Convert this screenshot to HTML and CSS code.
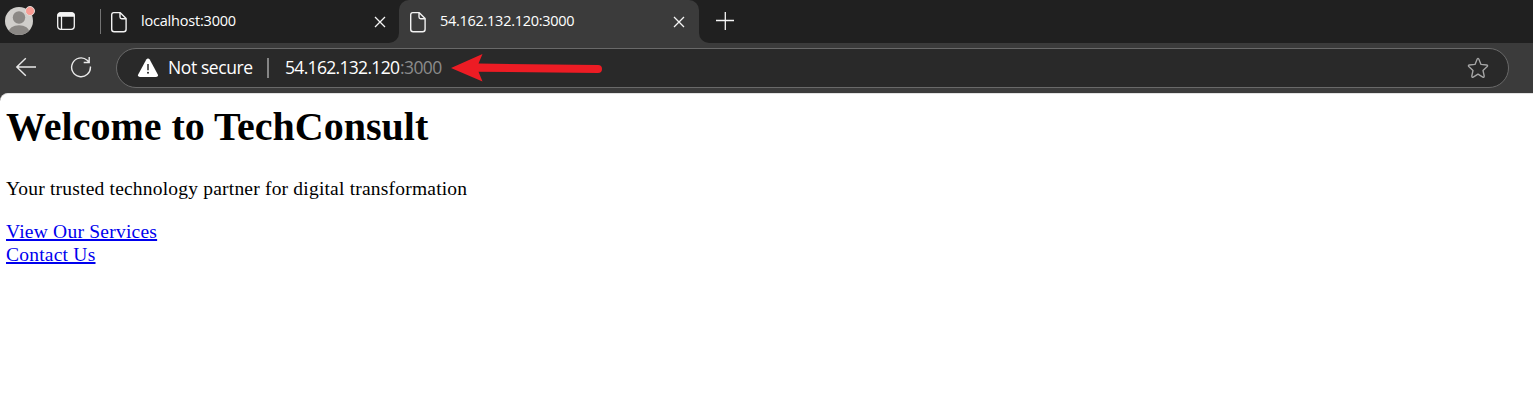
FILE: index.html
```html
<!DOCTYPE html>
<html lang="en">
<head>
<meta charset="utf-8">
<title>TechConsult</title>
<link rel="stylesheet" href="styles.css">
</head>
<body>
<div class="browser">
  <header class="tabstrip">
    <div class="controls">
      <svg class="avatar" width="40" height="43" viewBox="0 0 40 43">
        <defs><clipPath id="face"><circle cx="19" cy="21" r="14"/></clipPath></defs>
        <circle cx="19" cy="21" r="14" fill="#d0cecb"/>
        <g clip-path="url(#face)" fill="#8b8885"><circle cx="19" cy="17.500" r="6.200"/><ellipse cx="19" cy="32" rx="10.500" ry="6.800"/></g>
        <circle cx="30" cy="11" r="4.500" fill="#f99b93" stroke="#e2dcd7"/>
      </svg>
      <svg class="workspace" width="20" height="20" viewBox="0 0 20 20" fill="none" stroke="#f5f5f5" stroke-width="1.300">
        <rect x="1.700" y="1.800" width="16.600" height="16.500" rx="3"/>
        <path d="M2 5V4a2.200 2.200 0 0 1 2.200-2.200h11.600A2.200 2.200 0 0 1 18 4v1z" fill="#f5f5f5"/>
        <path d="M5.500 5v13"/>
      </svg>
      <span class="rule"></span>
    </div>
    <div class="tab">
      <svg class="doc" width="18" height="22" viewBox="0 0 18 22" fill="none" stroke="#f2f2f2" stroke-width="1.400" stroke-linejoin="round"><path d="M3.700 1.600H10L16.100 7.600V18.300Q16.100 20.800 13.600 20.800H4.200Q1.700 20.800 1.700 18.300V3.800Q1.700 1.600 3.700 1.600ZM10 1.600V6Q10 7.700 11.700 7.700H16.100"/></svg>
      <span class="tab-title tab-title-local">localhost:3000</span>
      <svg class="close" width="12" height="12" viewBox="0 0 12 12" stroke="#f5f5f5" stroke-width="1.300"><path d="M1 1l10 10M11 1L1 11"/></svg>
    </div>
    <div class="tab tab-active">
      <svg class="doc" width="18" height="22" viewBox="0 0 18 22" fill="none" stroke="#f2f2f2" stroke-width="1.400" stroke-linejoin="round"><path d="M3.700 1.600H10L16.100 7.600V18.300Q16.100 20.800 13.600 20.800H4.200Q1.700 20.800 1.700 18.300V3.800Q1.700 1.600 3.700 1.600ZM10 1.600V6Q10 7.700 11.700 7.700H16.100"/></svg>
      <span class="tab-title tab-title-ip">54.162.132.120:3000</span>
      <svg class="close" width="12" height="12" viewBox="0 0 12 12" stroke="#f5f5f5" stroke-width="1.300"><path d="M1 1l10 10M11 1L1 11"/></svg>
    </div>
    <svg class="plus" width="18" height="18" viewBox="0 0 18 18" stroke="#f5f5f5" stroke-width="1.300"><path d="M0 8.500h18M9.300 0v18"/></svg>
  </header>
  <div class="toolbar">
    <svg class="back" width="22" height="20" viewBox="0 0 22 20" fill="none" stroke="#e9e9e9" stroke-width="1.400"><path d="M21 10H1.800M10.800 1.300L1.800 10l9 8.700"/></svg>
    <svg class="reload" width="22" height="22" viewBox="0 0 22 22" fill="none" stroke="#e9e9e9" stroke-width="1.400"><path d="M20.400 10.500A9.400 9.400 0 1 1 17.200 4.200L19.200 6.300M19.200 1v5.500h-5.500"/></svg>
    <div class="address">
      <svg class="warning" width="22" height="20" viewBox="0 0 22 20"><path d="M9.300 1.600Q11-.800 12.700 1.600L20.800 16.400Q21.700 19 19 19H3Q.3 19 1.200 16.400Z" fill="#fff"/><path d="M11 6v6.200" stroke="#292929" stroke-width="1.500"/><circle cx="11" cy="14.800" r="1" fill="#292929"/></svg>
      <span class="security">Not secure</span>
      <span class="divider"></span>
      <span class="host">54.162.132.120</span><span class="port">:3000</span>
      <svg class="arrow" width="152" height="30" viewBox="0 0 152 30"><path d="M0 15L31.500 1L27.500 10.600L147 12a4 4 0 0 1 0 8L27.500 18.700L31.500 28.500Z" fill="#ed1c24"/></svg>
      <svg class="star" width="22" height="22" viewBox="0 0 22 22" fill="none" stroke="#a5a5a5" stroke-width="1.350" stroke-linejoin="round"><path d="M10.200 2Q11 .7 11.800 2L14 7.400 19.800 8Q21.200 8.500 20.200 9.500L16 13.500 17.200 19Q17.200 20.700 15.800 20.100L11 17.200 6.200 20.100Q4.800 20.700 4.800 19L6 13.500 1.800 9.500Q.8 8.500 2.200 8L8 7.400Z"/></svg>
    </div>
  </div>
  <main class="page">
    <h1 class="heading">Welcome to TechConsult</h1>
    <p class="tagline">Your trusted technology partner for digital transformation</p>
    <nav class="links"><a class="link" href="#services">View Our Services</a><a class="link" href="#contact">Contact Us</a></nav>
  </main>
</div>
</body>
</html>
```

FILE: styles.css
```css
* { box-sizing: border-box; }
body { margin: 0; overflow: hidden; background: #3b3b3b; }
svg { display: block; flex: none; }
.browser { height: 412px; display: flex; flex-direction: column; font-family: "Open Sans", "Noto Sans", sans-serif; }
.tabstrip { height: 43px; flex: none; display: flex; background: linear-gradient(#202020 0 21px, #3b3b3b 21px); }
.controls { width: 101px; display: flex; background: #202020; }
.workspace { margin: 11px 0 0 16px; }
.rule { width: 1px; height: 25px; margin: 9px 0 0 24px; background: #747474; }
.tab { width: 298px; display: flex; background: #202020; border-bottom-right-radius: 10px; padding: 0 13px 0 9px; }
.tab-active { width: 300px; background: #3b3b3b; border-radius: 10px 10px 0 0; padding-left: 10px; padding-right: 14px; }
.doc { margin-top: 11px; }
.tab-title { margin-left: 13px; color: #fff; font-size: 14.500px; line-height: 20px; margin-top: 11px; white-space: nowrap; }
.tab-title-local { letter-spacing: -.2px; }
.tab-title-ip { letter-spacing: -.28px; }
.close { margin: 16px 0 0 auto; }
.plus { box-sizing: content-box; padding: 12px 799px 13px 17px; background: #202020; border-bottom-left-radius: 10px; }
.toolbar { height: 50px; flex: none; display: flex; background: #3b3b3b; }
.back { margin: 14px 0 0 15px; }
.reload { margin: 13px 0 0 33px; }
.address { width: 1393px; height: 40px; margin: 5px 0 0 24px; display: flex; align-items: center; border: 1px solid #696969; border-radius: 20px; background: #292929; padding: 0 19px 0 20px; color: #fff; font-size: 17.500px; line-height: 24px; white-space: nowrap; }
.security { margin-left: 9px; width: 85px; letter-spacing: -.4px; }
.divider { width: 2px; height: 20px; background: #858585; margin: 0 16px 0 14px; }
.host { width: 115px; letter-spacing: -.68px; }
.port { width: 43px; color: #8b8b8b; letter-spacing: -.6px; }
.security, .host, .port { margin-top: -2px; }
.arrow { margin-left: 8px; }
.star { margin-left: auto; }
.page { flex: 1; background: #fff; border-top: 1px solid #e2e2e2; border-top-left-radius: 8px; padding: 10px 6px 0; font-family: "Liberation Serif", serif; color: #000; font-size: 19.500px; letter-spacing: .2px; }
.heading { margin: 0; font-size: 40px; line-height: 46px; letter-spacing: 0; }
.tagline { margin: 27px 0 20px; line-height: 23px; }
.links { display: flex; flex-direction: column; align-items: flex-start; line-height: 23px; }
.link { color: #0000ee; text-decoration: underline; text-decoration-thickness: 2px; letter-spacing: .23px; }
```
